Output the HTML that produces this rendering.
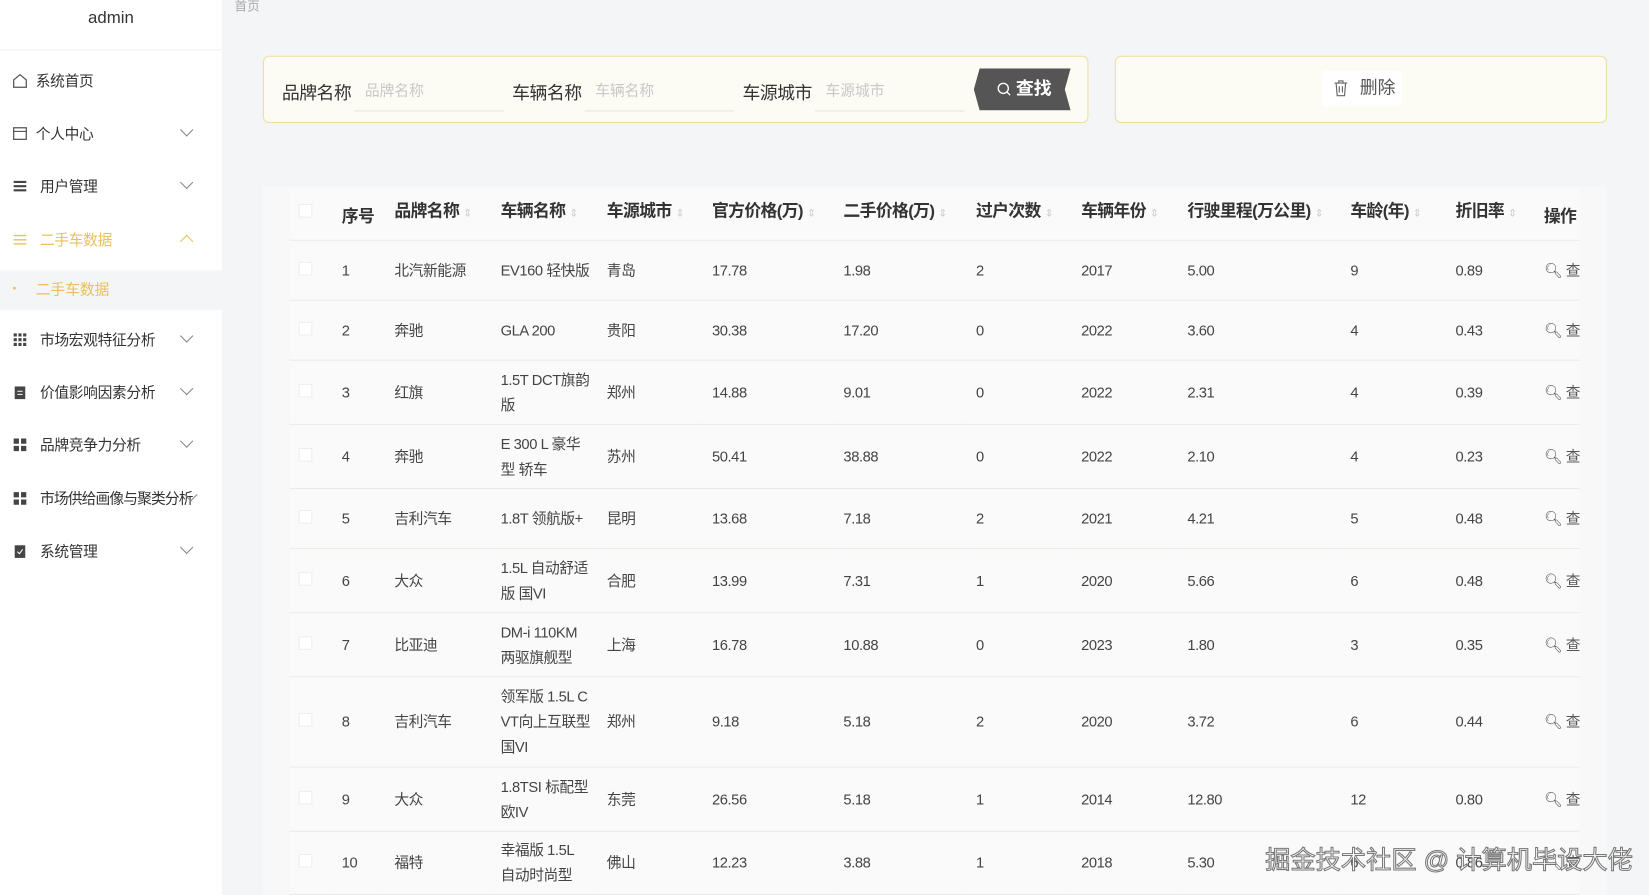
<!DOCTYPE html>
<html><head><meta charset="utf-8"><style>
*{margin:0;padding:0;box-sizing:border-box}
html,body{width:1649px;height:895px;overflow:hidden;background:#f3f5f7}
body{font-family:"Liberation Sans","Noto Sans CJK SC",sans-serif;color:#333;position:relative}
#w{position:absolute;left:0;top:0;width:1568px;height:851px;transform:scale(1.05166);transform-origin:0 0}
.side{position:absolute;left:0;top:0;width:211px;height:860px;background:#fff}
.logo{height:48px;text-align:center;font-size:16px;line-height:36px;color:#333;border-bottom:1px solid #f0f0f0}
.mi{position:absolute;left:0;width:211px;height:50px;font-size:14px;line-height:50px;color:#333}
.mi .ic{position:absolute;left:12px;top:18px;width:14px;height:14px}
.mi .t{position:absolute;left:38px;letter-spacing:-0.3px}
.mi .ar{position:absolute;left:173px;top:17px;width:9px;height:9px;border-right:1.3px solid #888;border-bottom:1.3px solid #888;transform:rotate(45deg)}
.sub{position:absolute;left:0;top:257px;width:211px;height:38px;background:#f4f5f6;font-size:14px;line-height:36px;color:#e8c15a}
.crumb{position:absolute;left:223px;top:-3px;font-size:12px;color:#aaa}
.box{position:absolute;top:53px;height:64px;border:1px solid #f0dd9a;border-radius:6px;background:#fcfbf4}
.lab{position:absolute;top:20px;font-size:17px;color:#333;letter-spacing:-0.5px}
.inp{position:absolute;top:14px;width:142px;height:38px;border-bottom:1px solid #e4e4e4;font-size:14px;color:#c8c8c8;line-height:36px;padding-left:10px}
.btn{position:absolute;left:675px;top:11px;width:92px;height:40px;background:#555;color:#fff;font-size:17px;font-weight:bold;line-height:40px;padding-left:40px;clip-path:polygon(6% 0,100% 0,94% 50%,100% 100%,6% 100%,0 50%)}
.del{position:absolute;top:13px;width:76px;height:34px;background:#fff;border-radius:3px;font-size:17px;line-height:34px;padding-left:36px;color:#555}
.card{position:absolute;left:250px;top:178px;width:1278px;height:700px;background:#f8f8f8}
.tw{position:absolute;left:275px;top:178px;width:1227px;height:700px;overflow:hidden}
table{width:1243px;border-collapse:collapse;table-layout:fixed;font-size:14px;background:#fafafa;letter-spacing:-0.4px}
td,th{padding-left:10px;text-align:left;vertical-align:middle;border-bottom:1px solid #ebebe6;line-height:24px;overflow:hidden;white-space:nowrap}
th{font-size:16px;font-weight:bold;color:#333;height:50px;letter-spacing:-0.6px}
td{color:#444}
.cb{display:inline-block;width:13px;height:13px;border:1px solid #eee;background:#fff;margin-left:-1px}
.s{color:#ccc;font-size:10px;font-weight:normal}
.op{font-size:14px;color:#555}
.wm{position:absolute;left:1203px;top:798px;font-size:24px;color:#fff;-webkit-text-stroke:1px #777}
</style></head><body><div id="w">
<div class="side">
<div class="logo">admin</div>
<div class="mi" style="top:52px"><svg class="ic" viewBox="0 0 14 14"><path d="M1 6L7 1l6 5v7H1z" fill="none" stroke="#555" stroke-width="1.2"/></svg><span class="t" style="left:34px">系统首页</span></div>
<div class="mi" style="top:102px"><svg class="ic" viewBox="0 0 14 14"><rect x="1" y="1.5" width="12" height="11" fill="none" stroke="#555" stroke-width="1.2"/><path d="M1 5h12" stroke="#555"/></svg><span class="t" style="left:34px">个人中心</span><i class="ar"></i></div>
<div class="mi" style="top:152px"><svg class="ic" viewBox="0 0 14 14"><path d="M1 3h12M1 7h12M1 11h12" stroke="#444" stroke-width="2"/></svg><span class="t">用户管理</span><i class="ar"></i></div>
<div class="mi" style="top:203px;color:#e8c15a"><svg class="ic" viewBox="0 0 14 14"><path d="M1 3h12M1 7h12M1 11h12" stroke="#e8c15a" stroke-width="1.3"/></svg><span class="t">二手车数据</span><i class="ar" style="transform:rotate(225deg);top:22px;border-color:#e8c15a"></i></div>
<div class="sub"><span style="position:absolute;left:12px;font-size:10px">•</span><span style="position:absolute;left:34px">二手车数据</span></div>
<div class="mi" style="top:298px"><svg class="ic" viewBox="0 0 14 14"><path d="M1 1h3v3H1zM5.5 1h3v3h-3zM10 1h3v3h-3zM1 5.5h3v3H1zM5.5 5.5h3v3h-3zM10 5.5h3v3h-3zM1 10h3v3H1zM5.5 10h3v3h-3zM10 10h3v3h-3z" fill="#444"/></svg><span class="t">市场宏观特征分析</span><i class="ar"></i></div>
<div class="mi" style="top:348px"><svg class="ic" viewBox="0 0 14 14"><rect x="2" y="1.5" width="10" height="12" fill="#444"/><path d="M4.5 6h5M4.5 9h5" stroke="#fff"/></svg><span class="t">价值影响因素分析</span><i class="ar"></i></div>
<div class="mi" style="top:398px"><svg class="ic" viewBox="0 0 14 14"><path d="M1 1h5v5H1zM8 1h5v5H8zM1 8h5v5H1zM8 8h5v5H8z" fill="#444"/></svg><span class="t">品牌竞争力分析</span><i class="ar"></i></div>
<div class="mi" style="top:449px"><svg class="ic" viewBox="0 0 14 14"><path d="M1 1h5v5H1zM8 1h5v5H8zM1 8h5v5H1zM8 8h5v5H8z" fill="#444"/></svg><span class="t" style="letter-spacing:-0.8px">市场供给画像与聚类分析</span><i class="ar" style="left:177px"></i></div>
<div class="mi" style="top:499px"><svg class="ic" viewBox="0 0 14 14"><rect x="2" y="1.5" width="10" height="12" fill="#444"/><path d="M4.5 7.5l2 2 3-4" stroke="#fff" fill="none"/></svg><span class="t">系统管理</span><i class="ar"></i></div>
</div>
<div class="crumb">首页</div>
<div class="box" style="left:250px;width:785px">
<span class="lab" style="left:17px">品牌名称</span><div class="inp" style="left:86px">品牌名称</div>
<span class="lab" style="left:236px">车辆名称</span><div class="inp" style="left:305px">车辆名称</div>
<span class="lab" style="left:455px">车源城市</span><div class="inp" style="left:524px">车源城市</div>
<div class="btn"><svg style="position:absolute;left:22px;top:13px" width="14" height="14" viewBox="0 0 14 14"><circle cx="6" cy="6" r="4.8" fill="none" stroke="#fff" stroke-width="1.3"/><path d="M9.5 9.5l3 3" stroke="#fff" stroke-width="1.3"/></svg>查找</div>
</div>
<div class="box" style="left:1060px;width:468px">
<div class="del" style="left:196px"><svg style="position:absolute;left:11px;top:9px" width="14" height="16" viewBox="0 0 14 16"><path d="M1 3h12M5 3V1h4v2M2.5 3l1 12h7l1-12M5.5 6v6M8.5 6v6" fill="none" stroke="#666" stroke-width="1.1"/></svg>删除</div>
</div>
<div class="card"></div>
<div class="tw"><table>
<colgroup><col style="width:40px"><col style="width:50px"><col style="width:101px"><col style="width:101px"><col style="width:100px"><col style="width:125px"><col style="width:126px"><col style="width:100px"><col style="width:101px"><col style="width:155px"><col style="width:100px"><col style="width:84px"><col style="width:60px"></colgroup>
<tr><th><span class="cb"></span></th><th style="padding-top:8px">序号</th><th>品牌名称 <span class="s">⇕</span></th><th>车辆名称 <span class="s">⇕</span></th><th>车源城市 <span class="s">⇕</span></th><th>官方价格(万) <span class="s">⇕</span></th><th>二手价格(万) <span class="s">⇕</span></th><th>过户次数 <span class="s">⇕</span></th><th>车辆年份 <span class="s">⇕</span></th><th>行驶里程(万公里) <span class="s">⇕</span></th><th>车龄(年) <span class="s">⇕</span></th><th>折旧率 <span class="s">⇕</span></th><th style="padding-top:8px">操作</th></tr>
<tr style="height:57px"><td><span class="cb"></span></td><td>1</td><td>北汽新能源</td><td>EV160 轻快版</td><td>青岛</td><td>17.78</td><td>1.98</td><td>2</td><td>2017</td><td>5.00</td><td>9</td><td>0.89</td><td class="op">🔍︎ 查</td></tr>
<tr style="height:57px"><td><span class="cb"></span></td><td>2</td><td>奔驰</td><td>GLA 200</td><td>贵阳</td><td>30.38</td><td>17.20</td><td>0</td><td>2022</td><td>3.60</td><td>4</td><td>0.43</td><td class="op">🔍︎ 查</td></tr>
<tr style="height:61px"><td><span class="cb"></span></td><td>3</td><td>红旗</td><td>1.5T DCT旗韵<br>版</td><td>郑州</td><td>14.88</td><td>9.01</td><td>0</td><td>2022</td><td>2.31</td><td>4</td><td>0.39</td><td class="op">🔍︎ 查</td></tr>
<tr style="height:61px"><td><span class="cb"></span></td><td>4</td><td>奔驰</td><td>E 300 L 豪华<br>型 轿车</td><td>苏州</td><td>50.41</td><td>38.88</td><td>0</td><td>2022</td><td>2.10</td><td>4</td><td>0.23</td><td class="op">🔍︎ 查</td></tr>
<tr style="height:57px"><td><span class="cb"></span></td><td>5</td><td>吉利汽车</td><td>1.8T 领航版+</td><td>昆明</td><td>13.68</td><td>7.18</td><td>2</td><td>2021</td><td>4.21</td><td>5</td><td>0.48</td><td class="op">🔍︎ 查</td></tr>
<tr style="height:61px"><td><span class="cb"></span></td><td>6</td><td>大众</td><td>1.5L 自动舒适<br>版 国VI</td><td>合肥</td><td>13.99</td><td>7.31</td><td>1</td><td>2020</td><td>5.66</td><td>6</td><td>0.48</td><td class="op">🔍︎ 查</td></tr>
<tr style="height:61px"><td><span class="cb"></span></td><td>7</td><td>比亚迪</td><td>DM-i 110KM<br>两驱旗舰型</td><td>上海</td><td>16.78</td><td>10.88</td><td>0</td><td>2023</td><td>1.80</td><td>3</td><td>0.35</td><td class="op">🔍︎ 查</td></tr>
<tr style="height:86px"><td><span class="cb"></span></td><td>8</td><td>吉利汽车</td><td>领军版 1.5L C<br>VT向上互联型<br>国VI</td><td>郑州</td><td>9.18</td><td>5.18</td><td>2</td><td>2020</td><td>3.72</td><td>6</td><td>0.44</td><td class="op">🔍︎ 查</td></tr>
<tr style="height:61px"><td><span class="cb"></span></td><td>9</td><td>大众</td><td>1.8TSI 标配型<br>欧IV</td><td>东莞</td><td>26.56</td><td>5.18</td><td>1</td><td>2014</td><td>12.80</td><td>12</td><td>0.80</td><td class="op">🔍︎ 查</td></tr>
<tr style="height:60px"><td><span class="cb"></span></td><td>10</td><td>福特</td><td>幸福版 1.5L<br>自动时尚型</td><td>佛山</td><td>12.23</td><td>3.88</td><td>1</td><td>2018</td><td>5.30</td><td>6</td><td>0.86</td><td class="op">🔍︎ 查</td></tr>
</table></div>
<div class="wm">掘金技术社区 @ 计算机毕设大佬</div>
</div></body></html>
